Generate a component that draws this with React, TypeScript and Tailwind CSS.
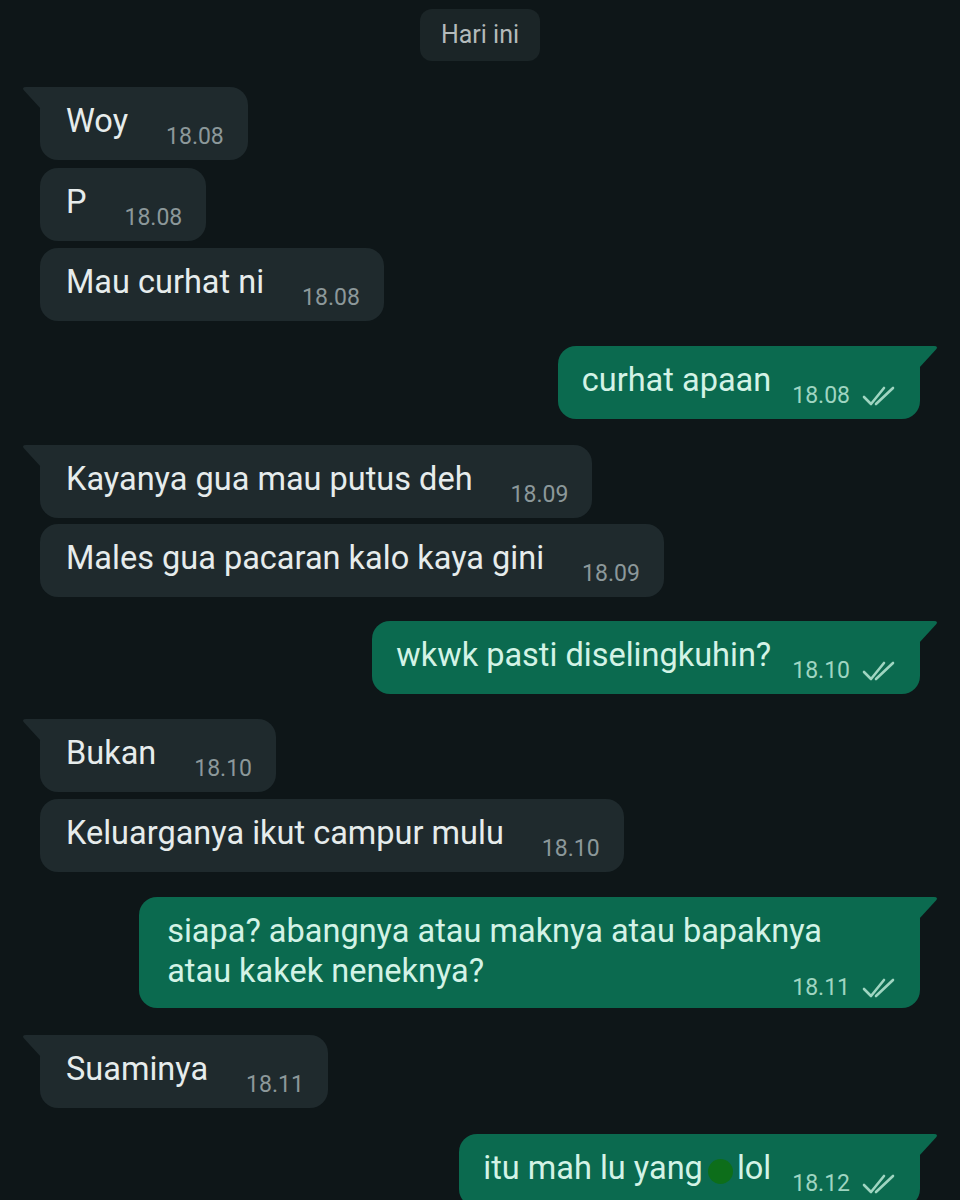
import React from "react";

type Msg = {
  side: "in" | "out";
  text: React.ReactNode;
  time: string;
  tail?: boolean;
  gap: string;
  multi?: boolean;
};

function Checks() {
  return (
    <svg width="40" height="22" viewBox="0 0 40 22" fill="none" className="ml-[10px] shrink-0">
      <path d="M4 12 L11 19 L24 3" stroke="#9fd5c1" strokeWidth="2.6" strokeLinecap="round" strokeLinejoin="round" />
      <path d="M16 19 L33 3" stroke="#9fd5c1" strokeWidth="2.6" strokeLinecap="round" />
    </svg>
  );
}

function InTail() {
  return (
    <svg width="19" height="22" viewBox="0 0 19 22" className="absolute left-[-18px] top-0">
      <path d="M19 0 H4 Q-1 0 2.5 4 L19 22 Z" fill="#1f2a2d" />
    </svg>
  );
}

function OutTail() {
  return (
    <svg width="19" height="22" viewBox="0 0 19 22" className="absolute right-[-18px] top-0">
      <path d="M0 0 H15 Q20 0 16.5 4 L0 22 Z" fill="#0b6a4f" />
    </svg>
  );
}

function Bubble({ m }: { m: Msg }) {
  if (m.side === "in") {
    return (
      <div
        className={`relative shrink-0 self-start ml-10 flex items-end bg-[#1f2a2d] rounded-[18px] pl-[26px] pr-[24px] pt-[14px] pb-[19px] ${
          m.tail ? "rounded-tl-none" : ""
        } ${m.gap}`}
      >
        {m.tail && <InTail />}
        <span className="text-[32.5px] leading-[40px] text-[#e6ecec] whitespace-nowrap">{m.text}</span>
        <span className="ml-[38px] mb-[-7px] text-[23px] leading-[22px] text-[#8c989a] whitespace-nowrap">
          {m.time}
        </span>
      </div>
    );
  }
  if (m.multi) {
    return (
      <div
        className={`relative shrink-0 self-end mr-10 flex flex-col bg-[#0b6a4f] rounded-[18px] pl-[28px] pr-[20px] pt-[14px] pb-[9px] ${
          m.tail ? "rounded-tr-none" : ""
        } ${m.gap}`}
      >
        {m.tail && <OutTail />}
        <span className="text-[32.5px] leading-[40px] text-[#d3f3e6] pr-[78px] whitespace-nowrap">{m.text}</span>
        <div className="flex items-center justify-end mt-[-14px]">
          <span className="text-[23px] leading-[22px] text-[#9fd5c1]">{m.time}</span>
          <Checks />
        </div>
      </div>
    );
  }
  return (
    <div
      className={`relative shrink-0 self-end mr-10 flex items-end bg-[#0b6a4f] rounded-[18px] pl-[24px] pr-[20px] pt-[14px] pb-[19px] ${
        m.tail ? "rounded-tr-none" : ""
      } ${m.gap}`}
    >
      {m.tail && <OutTail />}
      <span className="text-[32.5px] leading-[40px] text-[#d3f3e6] whitespace-nowrap">{m.text}</span>
      <span className="ml-[21px] mb-[-7px] flex items-center whitespace-nowrap">
        <span className="text-[23px] leading-[22px] text-[#9fd5c1]">{m.time}</span>
        <Checks />
      </span>
    </div>
  );
}

const msgs: Msg[] = [
  { side: "in", text: "Woy", time: "18.08", tail: true, gap: "mt-[26px]" },
  { side: "in", text: "P", time: "18.08", gap: "mt-[8px]" },
  { side: "in", text: "Mau curhat ni", time: "18.08", gap: "mt-[7px]" },
  { side: "out", text: "curhat apaan", time: "18.08", tail: true, gap: "mt-[25px]" },
  { side: "in", text: "Kayanya gua mau putus deh", time: "18.09", tail: true, gap: "mt-[26px]" },
  { side: "in", text: "Males gua pacaran kalo kaya gini", time: "18.09", gap: "mt-[6px]" },
  { side: "out", text: "wkwk pasti diselingkuhin?", time: "18.10", tail: true, gap: "mt-[24px]" },
  { side: "in", text: "Bukan", time: "18.10", tail: true, gap: "mt-[25px]" },
  { side: "in", text: "Keluarganya ikut campur mulu", time: "18.10", gap: "mt-[7px]" },
  {
    side: "out",
    text: (
      <>
        siapa? abangnya atau maknya atau bapaknya
        <br />
        atau kakek neneknya?
      </>
    ),
    time: "18.11",
    tail: true,
    multi: true,
    gap: "mt-[25px]",
  },
  { side: "in", text: "Suaminya", time: "18.11", tail: true, gap: "mt-[27px]" },
  {
    side: "out",
    text: (
      <span className="inline-flex items-center">
        itu mah lu yang
        <span className="inline-block shrink-0 w-[25px] h-[25px] rounded-full bg-[#0d6e1a] ml-[5px] mr-[4px] mt-[6px]" />
        lol
      </span>
    ),
    time: "18.12",
    tail: true,
    gap: "mt-[26px]",
  },
];

export default function App() {
  return (
    <div
      className="w-[960px] h-[1200px] overflow-hidden bg-[#0e1618] flex flex-col"
      style={{ fontFamily: "Roboto, 'Noto Sans', sans-serif" }}
    >
      <div className="shrink-0 self-center mt-[9px] h-[52px] px-[21px] rounded-[12px] bg-[#1b2527] flex items-center text-[25px] text-[#b3babb]">
        Hari ini
      </div>
      {msgs.map((m, i) => (
        <Bubble key={i} m={m} />
      ))}
    </div>
  );
}
